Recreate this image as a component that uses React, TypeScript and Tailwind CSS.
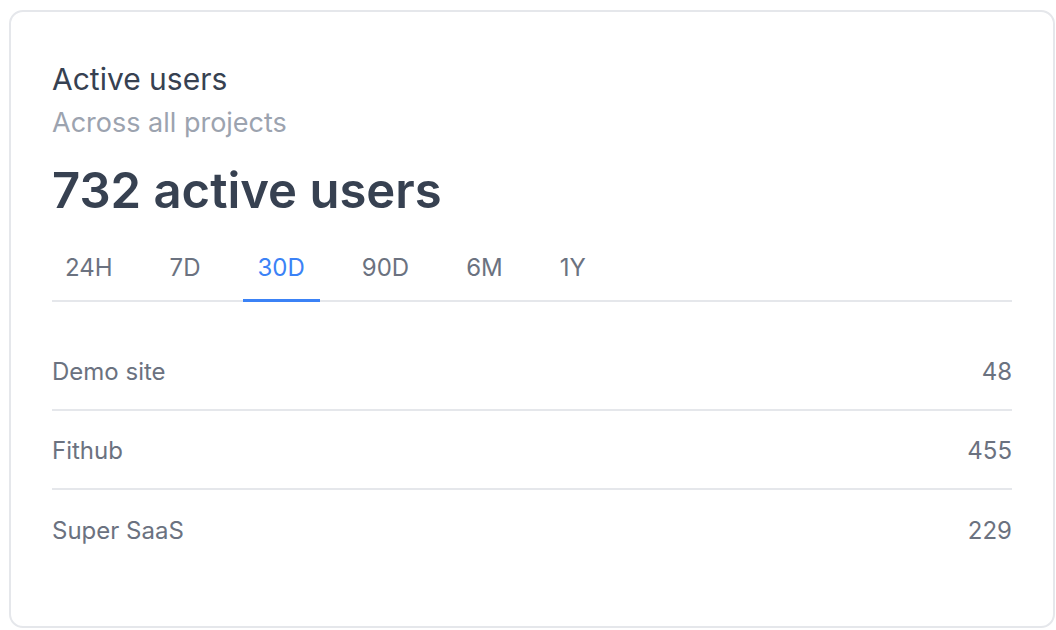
import React from "react";

const tabs = ["24H", "7D", "30D", "90D", "6M", "1Y"];
const rows = [
  { name: "Demo site", value: "48" },
  { name: "Fithub", value: "455" },
  { name: "Super SaaS", value: "229" },
];

export default function App() {
  return (
    <div
      className="w-[1056px] h-[630px] bg-white pt-[10px] pl-[9px] pr-[1px] pb-[2px]"
      style={{ fontFamily: "Inter, 'Noto Sans', sans-serif" }}
    >
      <div className="h-[618px] rounded-[14px] border-2 border-[#e5e7eb] bg-white px-[41px] pt-[47px]">
        <h2 className="text-[30px] leading-[40px] text-[#374151]">Active users</h2>
        <p className="text-[27px] leading-[36px] mt-[6px] text-[#9ca3af]">Across all projects</p>
        <p className="text-[49px] leading-[60px] font-semibold mt-[20px] text-[#374151]">732 active users</p>
        <div className="mt-[31px] border-b-2 border-[#e5e7eb]">
          <div className="flex gap-[27px] -ml-[2px]">
            {tabs.map((t) => (
              <div
                key={t}
                className={
                  t === "30D"
                    ? "-mb-[2px] px-[15px] pb-[15px] text-[24px] leading-[32px] text-[#3b82f6] border-b-[3px] border-[#3b82f6]"
                    : "-mb-[2px] px-[15px] pb-[15px] text-[24px] leading-[32px] text-[#6b7280] border-b-[3px] border-transparent"
                }
              >
                {t}
              </div>
            ))}
          </div>
        </div>
        <div className="mt-[30px]">
          {rows.map((r, i) => (
            <div
              key={r.name}
              className={
                i < rows.length - 1
                  ? "flex justify-between items-center h-[79px] pt-[2px] border-b-2 border-[#e5e7eb] text-[24px] text-[#6b7280]"
                  : "flex justify-between items-center h-[79px] pt-[2px] text-[24px] text-[#6b7280]"
              }
            >
              <span>{r.name}</span>
              <span>{r.value}</span>
            </div>
          ))}
        </div>
      </div>
    </div>
  );
}
